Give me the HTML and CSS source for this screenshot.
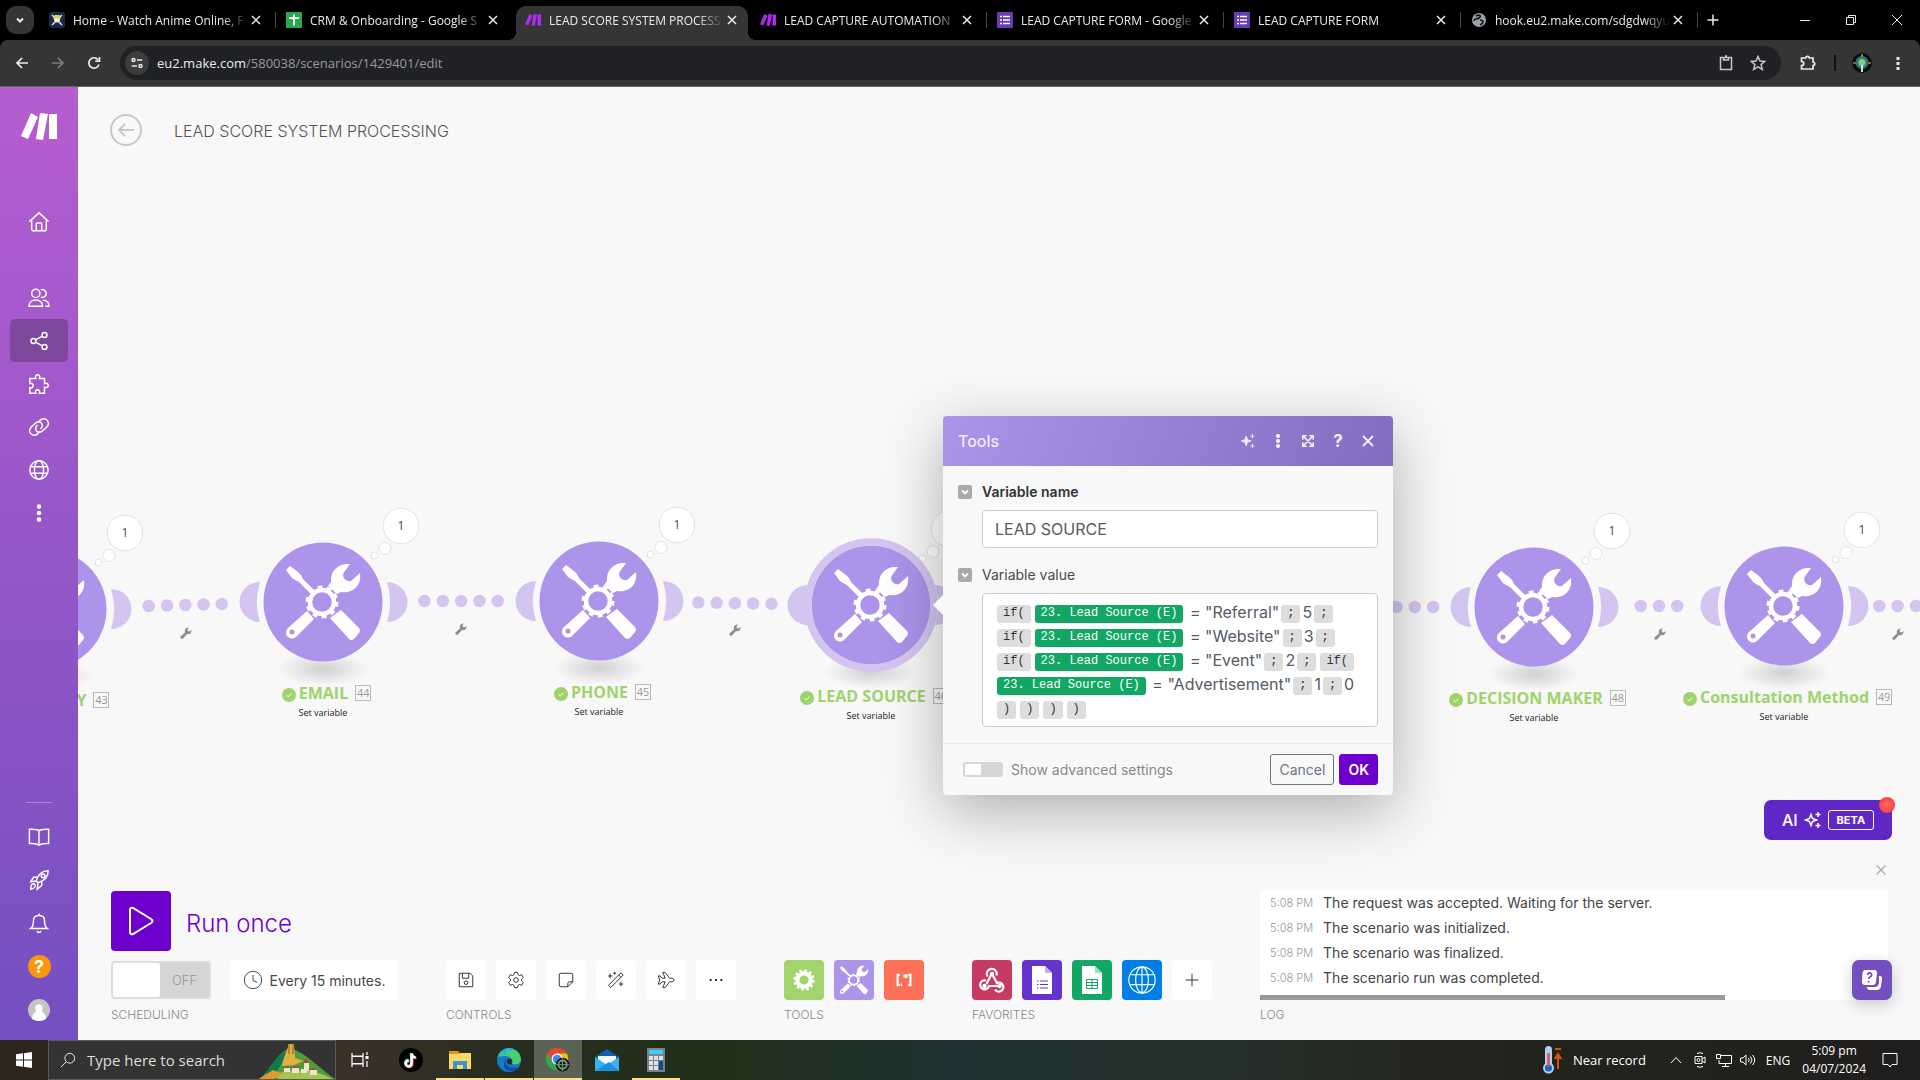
FILE: index.html
```
<!DOCTYPE html>
<html lang="en">
<head>
<meta charset="UTF-8" />
<meta name="viewport" content="width=device-width, initial-scale=1" />
<title>LEAD SCORE SYSTEM PROCESSING</title>
<link rel="stylesheet" href="styles.css">
</head>
<body>

<!-- shared icons -->
<svg class="sprite" aria-hidden="true">
  <radialGradient id="shadow"><stop offset="0" stop-color="#000" stop-opacity=".16"/><stop offset="1" stop-color="#000" stop-opacity="0"/></radialGradient>
  <symbol id="x" viewBox="0 0 16 16"><path d="M4 4l8 8M12 4l-8 8"/></symbol>
  <symbol id="make" viewBox="0 0 36 27"><path d="M10 0l7 4L7 26l-7-3zM19 0l8 1-5 26-7-1zM28 1h8v25h-8z"/></symbol>
  <symbol id="form" viewBox="0 0 16 16"><rect width="16" height="16" rx="1" fill="#673ab7"/><path d="M3 4.500h2M6 4.500h7M3 8h2M6 8h7M3 11.500h2M6 11.500h7" stroke="#fff" stroke-width="1.700"/></symbol>
  <symbol id="tools" viewBox="-42 -42 84 84">
    <path d="M-33-36L-37-32-31-24-28-22-24-20-13-9-9-12-20-23-22-27-25-30z"/>
    <path d="M27-38C15-39 7-31 8-20L5-16 14-8 18-10C28-8 39-15 37-29L28-21C23-20 19-24 20.500-29z"/>
    <circle cx="-1" r="12" fill="none" stroke="#fff" stroke-width="4.500"/>
    <circle cx="-1" r="15" fill="none" stroke="#fff" stroke-width="3" stroke-dasharray="4.700 4.720"/>
    <path fill-rule="evenodd" d="M-16 9L-35 26a5.600 5.600 0 0 0 8 9L-9 17zM-31 27.500a2.500 2.500 0 1 1 0 5 2.500 2.500 0 0 1 0-5z"/>
    <path d="M18 8L36 26Q38 28.500 36 31L31 37Q28.500 39 26 37L7 16z"/>
  </symbol>
  <symbol id="module" viewBox="-120 -100 240 200">
    <ellipse cy="67" rx="46" ry="17" fill="url(#shadow)"/>
    <path d="M-63-20a20.500 20 0 0 0 0 40a66 66 0 0 1 0-40zM64-20a20.500 20 0 0 1 0 40a66 66 0 0 0 0-40z" fill="#d4c5f0"/>
    <circle r="59.500" fill="#ab94ea"/>
    <use href="#tools" x="-42" y="-42" width="84" height="84" fill="#fff"/>
    <g fill="#fff" stroke="#e3e3e3"><circle cx="78" cy="-76" r="17.800"/><circle cx="62" cy="-53.500" r="6"/><circle cx="51.500" cy="-46.500" r="3.500"/></g>
  </symbol>
  <symbol id="ok" viewBox="0 0 14 14"><circle cx="7" cy="7" r="7" fill="#9fd36c"/><path d="M4.500 7.200l1.800 1.700 3.200-3.400" fill="none" stroke="#fff"/></symbol>
  <symbol id="wrench" viewBox="0 0 12 12"><path d="M.5 9.500L5 5.500C4 2.500 6 .3 9 .5L7.500 2.300 8 4 9.800 4.500 11.600 3c.3 3-2.100 4.800-4.600 4L3 11.500C1.500 12.500-.3 11 .5 9.500z" fill="#8d8d8d"/></symbol>
  <symbol id="sparkle" viewBox="0 0 18 18"><path d="M7 3.500l1.500 4L12.500 9l-4 1.500L7 14.500l-1.500-4L1.500 9l4-1.500zM14 1v5M11.500 3.500h5M14 12v5M11.500 14.500h5"/></symbol>
  <symbol id="chev" viewBox="0 0 14 14"><path d="M4 5.500l3 3 3-3" fill="none" stroke="#fff" stroke-width="1.800"/></symbol>
  <symbol id="globe" viewBox="0 0 24 24"><circle cx="12" cy="12" r="10"/><ellipse cx="12" cy="12" rx="5" ry="10"/><path d="M3.500 8.500h17M3.500 15.500h17"/></symbol>
  <symbol id="puzzle" viewBox="0 0 24 24"><path d="M2 6h6.500C6.500 .5 14.500 .5 12.500 6H18v5.500c5.500-2 5.500 6 0 4V22h-5.500c1.500-5-5.500-5-4 0H2v-6c5 1.500 5-6 0-4.500z"/></symbol>
</svg>

<header class="browser">
  <div class="tabs">
    <button class="tab-search" aria-label="Search tabs"><svg viewBox="0 0 14 14"><path d="M4 5.500l3 3 3-3"/></svg></button>
    <div class="tab">
      <svg class="favicon" viewBox="0 0 16 16"><rect width="16" height="16" rx="3" fill="#1c2b4a"/><path d="M3 3l10 10M13 3L3 13" stroke="#ddd" stroke-width="1.500"/><circle cx="8" cy="7.500" r="3" fill="#eee"/><path d="M4 6.500h8L10.500 3h-5z" fill="#e8d44d"/></svg>
      <span class="tab-title">Home - Watch Anime Online, F</span>
      <button class="tab-close" aria-label="Close tab"><svg><use href="#x"/></svg></button>
    </div>
    <div class="tab plain">
      <svg class="favicon" viewBox="0 0 16 16"><rect width="16" height="16" rx="1" fill="#2aa84f"/><path d="M8 2.500v11M3 6h10" stroke="#fff" stroke-width="2"/></svg>
      <span class="tab-title">CRM &amp; Onboarding - Google S</span>
      <button class="tab-close" aria-label="Close tab"><svg><use href="#x"/></svg></button>
    </div>
    <div class="tab active">
      <svg class="favicon make-icon"><use href="#make"/></svg>
      <span class="tab-title">LEAD SCORE SYSTEM PROCESS</span>
      <button class="tab-close" aria-label="Close tab"><svg><use href="#x"/></svg></button>
    </div>
    <div class="tab">
      <svg class="favicon make-icon"><use href="#make"/></svg>
      <span class="tab-title">LEAD CAPTURE AUTOMATION</span>
      <button class="tab-close" aria-label="Close tab"><svg><use href="#x"/></svg></button>
    </div>
    <div class="tab">
      <svg class="favicon"><use href="#form"/></svg>
      <span class="tab-title">LEAD CAPTURE FORM - Google</span>
      <button class="tab-close" aria-label="Close tab"><svg><use href="#x"/></svg></button>
    </div>
    <div class="tab">
      <svg class="favicon"><use href="#form"/></svg>
      <span class="tab-title">LEAD CAPTURE FORM</span>
      <button class="tab-close" aria-label="Close tab"><svg><use href="#x"/></svg></button>
    </div>
    <div class="tab">
      <svg class="favicon" viewBox="0 0 16 16"><circle cx="8" cy="8" r="7" fill="#9aa0a6"/><path d="M5 4c3-2 6 0 3 2s-5 0-5 3M9 8c4 0 4 3 0 5" fill="none" stroke="#111" stroke-width="1.600"/></svg>
      <span class="tab-title">hook.eu2.make.com/sdgdwqyu</span>
      <button class="tab-close" aria-label="Close tab"><svg><use href="#x"/></svg></button>
    </div>
    <button class="new-tab" aria-label="New tab"><svg viewBox="0 0 16 16"><path d="M8 2.500v11M2.500 8h11"/></svg></button>
    <div class="window-buttons">
      <button aria-label="Minimize"><svg viewBox="0 0 12 12"><path d="M1 6.500h10"/></svg></button>
      <button aria-label="Restore"><svg viewBox="0 0 12 12"><path d="M1.500 3.500h7v7h-7zM3.500 3.500v-2h7v7h-2"/></svg></button>
      <button aria-label="Close"><svg viewBox="0 0 12 12"><path d="M1 1l10 10M11 1L1 11"/></svg></button>
    </div>
  </div>
  <div class="toolbar">
    <button aria-label="Back"><svg viewBox="0 0 16 16"><path d="M14 8H3M8 3L3 8l5 5"/></svg></button>
    <button class="dim" aria-label="Forward"><svg viewBox="0 0 16 16"><path d="M2 8h11M8 3l5 5-5 5"/></svg></button>
    <button aria-label="Reload"><svg viewBox="0 0 16 16"><path d="M13 9.500A5.200 5.200 0 1 1 12 4.600M13.500 2v4.200h-4.200"/></svg></button>
    <div class="omnibox">
      <span class="site-info"><svg viewBox="0 0 16 16"><path d="M8 4.500h6M2 11.500h6"/><circle cx="4" cy="4.500" r="1.700"/><circle cx="12" cy="11.500" r="1.700"/></svg></span>
      <div class="url" role="textbox" contenteditable="true" aria-label="Address">eu2.make.com<span>/580038/scenarios/1429401/edit</span></div>
      <button aria-label="Clipboard"><svg viewBox="0 0 16 16"><path d="M2.500 2.500h11v12h-11zM5.500 2.500h5v2.500h-5zM7 1h2"/></svg></button>
      <button aria-label="Bookmark"><svg viewBox="0 0 16 16"><path d="M8 1.500l2 4.500 4.800.4-3.700 3.200 1.200 4.800L8 11.800l-4.300 2.600 1.200-4.800L1.200 6.400 6 6z"/></svg></button>
    </div>
    <button class="extensions" aria-label="Extensions"><svg viewBox="0 0 16 16"><path d="M1.500 3h4.200c0-2.300 3.600-2.300 3.600 0h3.700v4c2.300 0 2.300 3.500 0 3.500V14H1.500v-3.500c3 0 3-4 0-4z"/></svg></button>
    <span class="divider"></span>
    <svg class="profile" viewBox="0 0 20 20"><circle cx="10" cy="10" r="10" fill="#0b0f0c"/><circle cx="10" cy="9.500" r="6.500" fill="#2c7a73"/><circle cx="10" cy="9.500" r="3.500" fill="#8cc58a"/><path d="M1 10h18M10 1v18" stroke="#9a8a4a" stroke-dasharray="3 12"/><path d="M10 12v7" stroke="#ddd" stroke-width="2"/></svg>
    <button class="menu" aria-label="Menu"><svg viewBox="0 0 16 16"><path class="solid" d="M6.500 2h3v3h-3zM6.500 7h3v3h-3zM6.500 12h3v3h-3z"/></svg></button>
  </div>
</header>

<div class="app">
  <nav class="sidebar">
    <a class="logo" href="#" aria-label="Make"><svg><use href="#make"/></svg></a>
    <a href="#" aria-label="Home"><svg viewBox="0 0 24 24"><path d="M1.500 11.500L12 2l10.500 9.500M4 10v9.500q0 2 2 2h12q2 0 2-2V10M9 21.500V14q0-1 1-1h4q1 0 1 1v7.500"/></svg></a>
    <a class="team" href="#" aria-label="Team"><svg viewBox="0 0 24 24"><circle cx="8.500" cy="7" r="4.500"/><path d="M14 3a4.300 4.300 0 1 1 0 8M1 21c0-9 15-9 15 0zM16 14.500c4 0 7 2 7 6.500h-4"/></svg></a>
    <a class="current" href="#" aria-label="Scenarios"><svg viewBox="0 0 24 24"><circle cx="6" cy="12" r="2.700"/><circle cx="18" cy="5.500" r="2.700"/><circle cx="18" cy="18.500" r="2.700"/><path d="M8.700 10.500l6.600-3.500M8.700 13.500l6.600 3.500"/></svg></a>
    <a href="#" aria-label="Templates"><svg><use href="#puzzle"/></svg></a>
    <a href="#" aria-label="Connections"><svg viewBox="0 0 24 24"><path d="M13 17l-2.500 2.500c-3 3-7 1-8-1-1.500-2.500-.5-5 1-6.500L8 8c3-3 7-1.500 7.500 1.500.5 2-.5 3.500-2 4.500M11 7l2.500-2.500c3-3 7-1 8 1 1.500 2.500.5 5-1 6.500L16 16c-3 3-7 1.500-7.500-1.500C8 12.500 9 11 10.500 10"/></svg></a>
    <a href="#" aria-label="Webhooks"><svg><use href="#globe"/></svg></a>
    <a href="#" aria-label="More"><svg viewBox="0 0 24 24"><g class="solid"><circle cx="12" cy="5" r="2.500"/><circle cx="12" cy="12" r="2.500"/><circle cx="12" cy="19" r="2.500"/></g></svg></a>
    <hr>
    <a href="#" aria-label="Resources"><svg viewBox="0 0 24 24"><path d="M12 5C9 3 4 3.500 1.500 3.500V19c4 0 8-.5 10.500 2 2.500-2.500 6.500-2 10.500-2V3.500C20 3.500 15 3 12 5zv16"/></svg></a>
    <a href="#" aria-label="What's new"><svg viewBox="0 0 24 24"><path d="M9 13C11 6 15 2 22 2c0 7-4 11-11 13zM10 9H6l-3 5 6-1M15 14v4l-5 4 1-7M3 22c0-5 1-6 4-6 2 2 1 5-4 6z"/><circle cx="16.500" cy="7.500" r="2"/></svg></a>
    <a href="#" aria-label="Notifications"><svg viewBox="0 0 24 24"><path d="M3 18c3-2 3-5 3-9 0-7 12-7 12 0 0 4 0 7 3 9zM12 3V1.500M9.500 21q2.500 2.500 5 0"/></svg></a>
    <a class="help" href="#" aria-label="Help">?</a>
    <a class="user" href="#" aria-label="Profile"><svg viewBox="0 0 22 22"><circle cx="11" cy="11" r="11" fill="#c4c4c4"/><path d="M4 20c0-6 4-6 4-8-4-9 10-9 6 0 0 2 4 2 4 8q-7 4-14 0z" fill="#fff"/></svg></a>
  </nav>

  <main class="scenario">
    <div class="title-bar">
      <button class="back" aria-label="Back"><svg viewBox="0 0 32 32"><circle cx="16" cy="16" r="15"/><path d="M24 16H9M15 10l-6 6 6 6"/></svg></button>
      <h1>LEAD SCORE SYSTEM PROCESSING</h1>
    </div>

    <div class="canvas">
      <svg class="links">
        <g stroke="#d4c5f0" stroke-width="12.500" stroke-linecap="round" stroke-dasharray="0 18.300">
          <path d="M70.700 519L144 517M346.500 514h73.500M620.300 515.500L693.600 516.800M1318.500 520h37M1562.700 519h37M1801.300 519h38"/>
        </g>
        <use href="#wrench" x="102" y="540" width="12" height="12"/>
        <use href="#wrench" x="377" y="536" width="12" height="12"/>
        <use href="#wrench" x="651" y="537" width="12" height="12"/>
        <use href="#wrench" x="1576" y="541" width="12" height="12"/>
        <use href="#wrench" x="1814" y="541" width="12" height="12"/>
      </svg>

      <div class="module m43">
        <svg class="shape"><use href="#module"/></svg>
        <span class="count">1</span>
        <div class="name"><svg><use href="#ok"/></svg>COUNTRY<span class="id">43</span></div>
        <div class="action">Set variable</div>
      </div>
      <div class="module m44">
        <svg class="shape"><use href="#module"/></svg>
        <span class="count">1</span>
        <div class="name"><svg><use href="#ok"/></svg>EMAIL<span class="id">44</span></div>
        <div class="action">Set variable</div>
      </div>
      <div class="module m45">
        <svg class="shape"><use href="#module"/></svg>
        <span class="count">1</span>
        <div class="name"><svg><use href="#ok"/></svg>PHONE<span class="id">45</span></div>
        <div class="action">Set variable</div>
      </div>
      <div class="module m46">
        <svg class="shape" viewBox="-120 -100 240 200"><use href="#module" x="-120" y="-100" width="240" height="200"/><circle r="63" fill="none" stroke="#d4c5f0" stroke-width="7.500"/></svg>
        <span class="count">1</span>
        <div class="name"><svg><use href="#ok"/></svg>LEAD SOURCE<span class="id">46</span></div>
        <div class="action">Set variable</div>
      </div>
      <div class="module m48">
        <svg class="shape"><use href="#module"/></svg>
        <span class="count">1</span>
        <div class="name"><svg><use href="#ok"/></svg>DECISION MAKER<span class="id">48</span></div>
        <div class="action">Set variable</div>
      </div>
      <div class="module m49">
        <svg class="shape"><use href="#module"/></svg>
        <span class="count">1</span>
        <div class="name"><svg><use href="#ok"/></svg>Consultation Method<span class="id">49</span></div>
        <div class="action">Set variable</div>
      </div>
    </div>

    <section class="panel">
      <header class="panel-head">
        <h2>Tools</h2>
        <button aria-label="AI assistant"><svg class="solid"><use href="#sparkle"/></svg></button>
        <button aria-label="More"><svg class="solid" viewBox="0 0 16 16"><circle cx="8" cy="3" r="1.700"/><circle cx="8" cy="8" r="1.700"/><circle cx="8" cy="13" r="1.700"/></svg></button>
        <button aria-label="Expand"><svg viewBox="0 0 16 16"><path d="M2 6.500V2h4.500M9.500 2H14v4.500M14 9.500V14H9.500M6.500 14H2V9.500M3 3l10 10M13 3L3 13"/></svg></button>
        <button class="question" aria-label="Help">?</button>
        <button aria-label="Close"><svg class="wide"><use href="#x"/></svg></button>
      </header>
      <div class="panel-body">
        <div class="field">
          <button class="fold" aria-label="Collapse"><svg><use href="#chev"/></svg></button>
          <label class="required" for="varName">Variable name</label>
          <input type="text" id="varName" value="LEAD SOURCE" />
        </div>
        <div class="field">
          <button class="fold" aria-label="Collapse"><svg><use href="#chev"/></svg></button>
          <span class="label" id="varValue">Variable value</span>
          <div class="formula" role="textbox" contenteditable="true" spellcheck="false" aria-labelledby="varValue">
            <div><code>if(</code><code class="var">23. Lead Source (E)</code> = "Referral"<code>;</code>5<code>;</code></div>
            <div><code>if(</code><code class="var">23. Lead Source (E)</code> = "Website"<code>;</code>3<code>;</code></div>
            <div><code>if(</code><code class="var">23. Lead Source (E)</code> = "Event"<code>;</code>2<code>;</code><code>if(</code></div>
            <div><code class="var">23. Lead Source (E)</code> = "Advertisement"<code>;</code>1<code>;</code>0</div>
            <div><code>)</code><code>)</code><code>)</code><code>)</code></div>
          </div>
        </div>
      </div>
      <footer class="panel-foot">
        <label class="advanced"><input type="checkbox" class="switch" />Show advanced settings</label>
        <button class="cancel">Cancel</button>
        <button class="submit">OK</button>
      </footer>
    </section>

    <button class="ai">AI <svg><use href="#sparkle"/></svg><span class="beta">BETA</span></button>

    <div class="dock">
      <section class="group scheduling">
        <button class="run"><span class="run-icon"><svg viewBox="0 0 30 30"><path d="M4 4q0-3 3-2l18 11q3 2 0 4L7 28q-3 1-3-2z"/></svg></span><span class="run-text">Run once</span></button>
        <div class="row">
          <label class="power"><input type="checkbox" /><span>OFF</span></label>
          <button class="interval"><svg viewBox="0 0 20 20"><circle cx="10" cy="10" r="8.700"/><path d="M10 5v5.500l4 2"/></svg>Every 15 minutes.</button>
        </div>
        <h3>SCHEDULING</h3>
      </section>
      <section class="group">
        <div class="row">
          <button class="tile" aria-label="Save"><svg viewBox="0 0 20 20"><path d="M2.500 2.500h12l3 3v12h-15zM6 2.500V8h7V2.500"/><circle cx="10" cy="13" r="2"/></svg></button>
          <button class="tile" aria-label="Settings"><svg viewBox="0 0 20 20"><path d="M8.300 1.500h3.400l.6 2.600 1.600.9 2.500-.8 1.700 3-1.900 1.800v2l1.900 1.800-1.700 3-2.500-.8-1.600.9-.6 2.600H8.300l-.6-2.600-1.600-.9-2.500.8-1.700-3L3.800 11V9L1.900 7.200l1.700-3 2.500.8 1.600-.9z"/><circle cx="10" cy="10" r="2.600"/></svg></button>
          <button class="tile" aria-label="Notes"><svg viewBox="0 0 20 20"><path d="M2.500 4.500q0-2 2-2h11q2 0 2 2V12l-5.500 5.500H4.500q-2 0-2-2zM17.500 12H14q-2 0-2 2v3.500"/></svg></button>
          <button class="tile" aria-label="Auto-align"><svg viewBox="0 0 20 20"><path d="M1.500 16L15.500 2l2.500 2.500L4 18.500zM13 4.500L15.500 7M3.500 3v5M1 5.500h5M8.500 1v3M7 2.500h3M15.500 12v5M13 14.500h5"/></svg></button>
          <button class="tile" aria-label="Explain flow"><svg viewBox="0 0 20 20"><path d="M1.500 5.500h2l2 2.500h3.500L6.500 1.500h2.500l5 6.500h3q2 .8 2 2t-2 2h-3l-5 6.500H6.500L9 12H5.500l-2 2.500h-2L3 10z"/></svg></button>
          <button class="tile" aria-label="More"><svg viewBox="0 0 20 20"><path d="M3 10h2M9 10h2M15 10h2" stroke-width="2"/></svg></button>
        </div>
        <h3>CONTROLS</h3>
      </section>
      <section class="group">
        <div class="row">
          <button class="tile green" aria-label="Flow control"><svg viewBox="0 0 28 28"><circle cx="14" cy="14" r="7.200" stroke-width="4.500"/><circle cx="14" cy="14" r="10.200" stroke-width="2.800" stroke-dasharray="2.900 2.440"/></svg></button>
          <button class="tile violet" aria-label="Tools"><svg class="solid"><use href="#tools"/></svg></button>
          <button class="tile coral" aria-label="Text parser"><svg viewBox="0 0 28 28"><path d="M9 8H6.500v12H9M19 8h2.500v12H19" stroke-width="2.500"/><path d="M11 18v3M16 7v5M13.500 8l5 3M18.500 8l-5 3" stroke-width="1.600"/></svg></button>
        </div>
        <h3>TOOLS</h3>
      </section>
      <section class="group">
        <div class="row">
          <button class="tile crimson" aria-label="Webhooks"><svg viewBox="0 0 28 28"><g stroke-width="2.200"><path d="M9.500 10.500a5 5 0 1 1 9-1M14 8l5 9a4.500 4.500 0 1 1-2 6.500M13.500 8l-5 10M8 14.500a4.500 4.500 0 1 0 3 5.500h9"/></g><g fill="#fff" stroke="none"><circle cx="14" cy="8" r="2.200"/><circle cx="6.500" cy="20" r="2.200"/><circle cx="21.500" cy="20" r="2.200"/></g></svg></button>
          <button class="tile purple" aria-label="Google Forms"><svg viewBox="0 0 28 28"><path d="M4 0h13l7 7v21H4z" fill="#fff" stroke="none"/><path d="M17 0l7 7h-7z" fill="#c3b2ea" stroke="none"/><path d="M9 15h1.500M12 15h8M9 18.500h1.500M12 18.500h8M9 22h1.500M12 22h8" stroke="#6633cc"/></svg></button>
          <button class="tile emerald" aria-label="Google Sheets"><svg viewBox="0 0 28 28"><path d="M4 0h13l7 7v21H4z" fill="#fff" stroke="none"/><path d="M17 0l7 7h-7z" fill="#9fdcc0" stroke="none"/><path d="M8.500 13.500h11v9h-11zM8.500 16.500h11M8.500 19.500h11M14 13.500v9" stroke="#12a765"/></svg></button>
          <button class="tile blue" aria-label="HTTP"><svg viewBox="0 0 24 24"><circle cx="12" cy="12" r="11.300"/><ellipse cx="12" cy="12" rx="5.500" ry="11"/><path d="M2 7.500h20M2 16h20M12 1v22"/></svg></button>
          <button class="tile" aria-label="Add"><svg viewBox="0 0 20 20"><path d="M10 3v14M3 10h14"/></svg></button>
        </div>
        <h3>FAVORITES</h3>
      </section>
      <section class="group log">
        <button class="log-close" aria-label="Close log"><svg><use href="#x"/></svg></button>
        <div class="log-box">
          <ul>
            <li><time>5:08 PM</time>The request was accepted. Waiting for the server.</li>
            <li><time>5:08 PM</time>The scenario was initialized.</li>
            <li><time>5:08 PM</time>The scenario was finalized.</li>
            <li><time>5:08 PM</time>The scenario run was completed.</li>
          </ul>
          <div class="log-scroll"></div>
          <button class="faq" aria-label="Questions"><svg viewBox="0 0 22 22"><path d="M4 1h9q3 0 3 3l-1 9q-.5 3-3 3H4q-3 0-3-3L1.500 4Q2 1 4 1z" fill="#fff"/><path d="M18 7c3 0 3 1 3 3l-1 7q-.5 4-4 4H9q-3 0-3-3h7c4 0 5-2 5-6z" fill="#fff"/><path d="M6.500 6q.3-2 2.300-2t1.800 2q-.2 1.300-1.600 2T7.800 10M7.500 12v1.500" fill="none" stroke="#734fc0" stroke-width="1.800"/></svg></button>
        </div>
        <h3>LOG</h3>
      </section>
    </div>
  </main>
</div>

<footer class="taskbar">
  <button class="start" aria-label="Start"><svg viewBox="0 0 16 16"><path d="M0 2.300L7 1.300v6.200H0zM8 1.200L16 0v7.500H8zM0 8.500h7v6.200l-7-1zM8 8.500h8V16l-8-1.200z" fill="#fff" stroke="none"/></svg></button>
  <div class="search">
    <svg viewBox="0 0 18 18"><circle cx="11" cy="7" r="5.500"/><path d="M7 11l-6 6"/></svg>
    <input type="text" placeholder="Type here to search" aria-label="Type here to search" />
    <svg class="castle" viewBox="0 0 76 36"><path d="M0 36C10 30 20 6 31 6s28 18 45 30z" fill="#4f9c3f"/><path d="M6 30C14 22 20 10 27 8c-2 12-8 18-14 26z" fill="#0d7a4c"/><path d="M24 18l6-17h5l1 14 9 3-10 4-12 1z" fill="#e0b243"/><path d="M29 1h2v10h-2zM33 1h2v10h-2z" fill="#b58a2c"/><path d="M15 33c12-8 40-8 58 3H20z" fill="#a3c552"/><path d="M0 36l14-9 10 4-10 5z" fill="#e49a2a"/><path d="M25 25h6v4h-6zM33 25h7v5h-7zM42 26h6v4h-6zM45 20h5v8h-5zM51 27h7v5h-7z" fill="#f2e3d0"/><path d="M24 25l4-2 4 2zM32 25l4-2 5 2zM44 20l3-5 3 5zM50 27l4-2 5 2z" fill="#b0452b"/></svg>
  </div>
  <div class="apps">
    <button class="task-view" aria-label="Task View"><svg viewBox="0 0 24 24"><path d="M4 5v3h11V5M4 8.500v7h11v-7zM4 19v-3h11v3M19 4v3M19 13v6" fill="none" stroke="#fff" stroke-width="1.200"/><path d="M17.500 8h3v3h-3z" fill="#fff"/></svg></button>
    <button aria-label="TikTok"><svg viewBox="0 0 24 24"><circle cx="12" cy="12" r="12" fill="#000"/><g fill="none" stroke-width="2.300"><path d="M12 5v10a3 3 0 1 1-3-3M12 5q.5 4 4 4" stroke="#25f4ee"/><path d="M13.500 6v10a3 3 0 1 1-3-3M13.500 6q.5 4 4 4" stroke="#fe2c55"/><path d="M12.700 5.500v10a3 3 0 1 1-3-3M12.700 5.500q.5 4 4 4" stroke="#fff"/></g></svg></button>
    <button class="open" aria-label="File Explorer"><svg viewBox="0 0 24 24"><path d="M1 3h9l2 2h11v5H1z" fill="#d99a16"/><path d="M1 6h10l2-1h10v16H1z" fill="#ffd766"/><path d="M5 21v-8h14v8h-4v-4H9v4z" fill="#3b94d9"/></svg></button>
    <button class="open" aria-label="Edge"><svg viewBox="0 0 24 24"><circle cx="12" cy="12" r="12" fill="#1679c9"/><path d="M1 9C4-2 22-3 24 11c0 5-5 6-9 5 3-6-5-10-14-7z" fill="#48d06f"/><path d="M1 9C4-1 15-2 19 3c-6-1-9 0-11 4-3-1-5 0-7 2z" fill="#29b5d8"/><path d="M10 10c-4 6 2 12 12 9-5 7-19 5-14-7z" fill="#0f4ea3"/><path d="M10 13c0-3 5-3 5 0-1 2 0 3 1 3.500C12 17 10 16 10 13z" fill="#232c1b"/></svg></button>
    <button class="open focused" aria-label="Chrome"><svg viewBox="0 0 26 26"><circle cx="12" cy="12" r="12" fill="#2da94f"/><path d="M12 0a12 12 0 0 1 10.400 6H12a6 6 0 0 0-5.200 9L1.600 6A12 12 0 0 1 12 0z" fill="#ea4335"/><path d="M22.400 6A12 12 0 0 1 12 24l5.200-9a6 6 0 0 0 0-6l-5.200-3z" fill="#fbbc05"/><circle cx="12" cy="12" r="6" fill="#fff"/><circle cx="12" cy="12" r="4.700" fill="#4285f4"/><circle cx="18" cy="18" r="7.500" fill="#11160f"/><circle cx="18" cy="18" r="4.500" fill="none" stroke="#5ea08b" stroke-width="2"/><path d="M18 11v14M11 18h14" stroke="#8b9a6a"/></svg></button>
    <button aria-label="Mail"><svg viewBox="0 0 24 24"><path d="M0 9l12-8 12 8v5H0z" fill="#0f61b0"/><path d="M3 8h18v8H3z" fill="#f4f8fb"/><path d="M0 9l12 8 12-8v14H0z" fill="#39b2f2"/><path d="M0 23l14-9 10 9z" fill="#1c8fe0"/></svg></button>
    <button class="open" aria-label="Calculator"><svg viewBox="0 0 24 24"><rect x="3" width="18" height="24" rx="1" fill="#77828c"/><path d="M5 2h14v4H5z" fill="#3fd0fa"/><path d="M5 8h4v4H5zM10 8h4v4h-4zM15 8h4v4h-4zM5 13h4v4H5zM10 13h4v4h-4zM5 18h4v4H5zM10 18h4v4h-4z" fill="#dde3e7"/><path d="M15 13h4v9h-4z" fill="#154b85"/></svg></button>
  </div>
  <div class="tray">
    <button class="weather"><svg viewBox="0 0 20 30"><rect x="2" y="1" width="7" height="22" rx="3.500" fill="#a8d4f2"/><circle cx="5.500" cy="23" r="5.500" fill="#a8d4f2"/><circle cx="5.500" cy="23" r="3.500" fill="#1565c0"/><path d="M5.500 8v14" stroke="#e5484d" stroke-width="2.500"/><path d="M12 4h6M15 24V10M12.500 13l2.500-4 2.500 4z" stroke="#d9500b" stroke-width="2" fill="#d9500b"/></svg>Near record</button>
    <svg viewBox="0 0 16 16"><path d="M3 11l5-5.500 5 5.500"/></svg>
    <svg viewBox="0 0 16 16"><path d="M5 1.500q3-1.500 6 0M5 14.500q3 1.500 6 0M3 4.500h7v7H3zM10 7l3-2v6l-3-2"/><circle cx="6.500" cy="8" r="1.500"/></svg>
    <svg viewBox="0 0 16 16"><path d="M4 3.500h11.500v8H3V8M9.500 11.500V14M6 14.500h7M.5 2.500h4v4h-4z"/></svg>
    <svg viewBox="0 0 16 16"><path d="M.5 6h2.500l3-3v10l-3-3H.5zM8.500 6q1.500 2 0 4M10.500 4.500q3 3.500 0 7M12.500 3q4.500 5 0 10"/></svg>
    <span class="lang">ENG</span>
    <div class="clock"><span>5:09 pm</span><span>04/07/2024</span></div>
    <svg class="notice" viewBox="0 0 16 16"><path d="M1 1.500h14v11h-5L8 15l-2-2.500H1z"/></svg>
  </div>
</footer>

</body>
</html>
```
FILE: styles.css
```
* { box-sizing: border-box; }
html, body { height: 100%; }
body { margin: 0; display: flex; flex-direction: column; overflow: hidden; background: #f8f8f8; color: #4a4a4a; font-family: Inter, "Open Sans", sans-serif; font-size: 14px; }
button { padding: 0; border: 0; background: none; color: inherit; font: inherit; cursor: pointer; display: flex; align-items: center; justify-content: center; }
a { color: inherit; text-decoration: none; }
h1, h2, h3, ul { margin: 0; padding: 0; font-weight: 300; }
svg { flex: none; fill: none; stroke: currentColor; width: 16px; height: 16px; }
.solid { fill: currentColor; }
.sprite { position: absolute; width: 0; height: 0; }
.sprite symbol { stroke: inherit; }

/* browser window */
.browser { background: #000; color: #e8eaed; font-family: "Segoe UI", "Open Sans", sans-serif; font-size: 12px; }
.tabs { display: flex; height: 40px; padding: 6px 0 0 6px; }
.tab-search { width: 28px; height: 28px; margin-right: 6px; border-radius: 10px; background: #353535; }
.tab-search svg { width: 14px; height: 14px; stroke-width: 2; }
.tab { position: relative; display: flex; align-items: center; gap: 8px; width: 232px; min-width: 0; margin-right: 5px; padding: 0 8px 6px 9px; }
.tab::after { content: ""; position: absolute; right: -4px; top: 6px; width: 1px; height: 16px; background: #444; }
.tab.plain::after { display: none; }
.tab.active { margin-left: 2px; margin-right: 3px; background: #353535; border-radius: 10px 10px 0 0; }
.tab.active::before, .tab.active::after { content: ""; position: absolute; top: auto; bottom: 0; width: 8px; height: 8px; }
.tab.active::before { left: -8px; background: radial-gradient(circle at 0 0, transparent 8px, #353535 8px); }
.tab.active::after { right: -8px; background: radial-gradient(circle at 100% 0, transparent 8px, #353535 8px); }
.favicon { width: 16px; height: 16px; stroke: none; }
.make-icon { fill: #b02af0; }
.tab-title { flex: 1; margin-right: -8px; white-space: nowrap; -webkit-mask-image: linear-gradient(90deg, #000 85%, transparent); mask-image: linear-gradient(90deg, #000 85%, transparent); }
.tab-close svg, .new-tab svg { stroke-width: 1.5; }
.new-tab { width: 28px; height: 28px; }
.window-buttons { display: flex; margin-left: auto; }
.window-buttons button { width: 46px; height: 28px; }
.window-buttons svg { width: 12px; height: 12px; }
.toolbar { display: flex; align-items: center; height: 47px; padding: 0 8px; background: #353535; border-bottom: 1px solid #666; border-radius: 8px 8px 0 0; }
.toolbar button { width: 28px; height: 28px; margin-right: 8px; }
.toolbar svg { stroke-width: 1.700; }
.toolbar .dim { color: #7d7d7d; }
.omnibox { flex: 1; display: flex; align-items: center; height: 34px; margin: 0 13px 0 4px; padding: 0 11px 0 5px; border-radius: 17px; background: #202124; }
.omnibox button { width: 24px; margin: 0 0 0 8px; color: #c7c7c7; }
.omnibox button svg { stroke-width: 1.500; }
.site-info { display: flex; align-items: center; justify-content: center; width: 24px; height: 24px; border-radius: 50%; background: #3c3c3c; }
.site-info svg { width: 14px; height: 14px; }
.url { flex: 1; margin-left: 8px; font-size: 13px; }
.url span { color: #9a9a9a; }
.divider { width: 2px; height: 16px; margin: 0 16px 0 4px; background: #111; }
.profile { width: 20px; height: 20px; margin-right: 12px; stroke: none; }
.toolbar .menu { width: 28px; margin: 0; }
.menu svg { stroke: none; }

/* app */
.app { flex: 1; display: flex; min-height: 0; }
.sidebar { position: relative; z-index: 2; display: flex; flex-direction: column; align-items: center; width: 78px; padding-bottom: 9px; background: linear-gradient(#b65dcf, #734fc0); color: #fff; }
.sidebar a { display: flex; align-items: center; justify-content: center; width: 58px; height: 43px; border-radius: 5px; }
.sidebar svg { width: 22px; height: 22px; stroke-width: 1.600; }
.sidebar .logo { height: 78px; margin-bottom: 35px; }
.logo svg { width: 36px; height: 27px; fill: #fff; stroke: none; }
.sidebar .team { margin-top: 33px; }
.sidebar .current { background: rgba(80, 50, 100, .45); }
.sidebar hr { width: 26px; margin: auto 0 12px; border: 0; border-top: 1px solid rgba(255, 255, 255, .3); }
.sidebar .solid, .sidebar .user svg { stroke: none; }
.sidebar .help { width: 23px; height: 23px; margin: 11px 0 10px; border-radius: 50%; background: #fb960b; font-size: 18px; font-weight: 700; }

.scenario { position: relative; flex: 1; display: flex; flex-direction: column; min-width: 0; overflow: hidden; }
.title-bar { position: relative; z-index: 1; display: flex; align-items: center; gap: 32px; padding: 27px 32px; }
.back svg { width: 32px; height: 32px; color: #c8c8c8; stroke-width: 2; }
.title-bar h1 { padding-top: 2px; font-size: 16px; color: #555; }

/* modules sit on a free canvas */
.canvas { position: absolute; inset: 0; overflow: hidden; font-family: "Segoe UI", "Open Sans", sans-serif; }
.links { position: absolute; inset: 0; width: 100%; height: 100%; stroke: none; }
.module { position: absolute; width: 240px; margin: -100px 0 0 -120px; text-align: center; }
.m43 { left: -31px; top: 522px; }
.m44 { left: 245px; top: 515px; }
.m45 { left: 521px; top: 514px; }
.m46 { left: 793px; top: 518px; }
.m48 { left: 1456px; top: 520px; }
.m49 { left: 1706px; top: 519px; }
.shape { display: block; width: 240px; height: 200px; stroke: none; }
.count { position: absolute; left: 180px; top: 15px; width: 36px; line-height: 18px; font-size: 12px; }
.name { display: flex; align-items: center; justify-content: center; gap: 3px; height: 22px; margin-top: -20px; padding-left: 7px; white-space: nowrap; color: #9fd36c; font-size: 16px; font-weight: 700; }
.name svg { width: 14px; height: 14px; margin-top: 3px; stroke: none; }
.id { width: 16px; margin-left: 4px; border: 1px solid #bbb; color: #999; font-size: 11px; font-weight: 400; line-height: 14px; }
.action { margin-top: 2px; font-size: 9px; line-height: 14px; color: #222; }

/* module settings */
.panel { position: absolute; z-index: 3; left: 865px; top: 329px; width: 450px; border-radius: 4px; background: #f8f8f8; box-shadow: 0 16px 60px rgba(0, 0, 0, .3); }
.panel::before { content: ""; position: absolute; left: -10px; top: 179px; border: solid transparent; border-width: 10px 10px 10px 0; border-right-color: #f8f8f8; }
.panel-head { display: flex; align-items: center; height: 50px; padding: 0 10px 0 15px; border-radius: 4px 4px 0 0; background: linear-gradient(110deg, #ab94ea, #836bc0); color: #f0ebfb; }
.panel-head h2 { flex: 1; font-size: 16px; font-weight: 500; }
.panel-head button { width: 30px; height: 30px; }
.panel-head svg { width: 14px; height: 14px; stroke-width: 1.700; }
.panel-head svg.solid { width: 16px; height: 16px; stroke-width: 1; }
.panel-head svg.wide { width: 20px; height: 20px; stroke-width: 1.500; }
.panel-head .question { font-size: 17px; font-weight: 700; }
.panel-body { display: flex; flex-direction: column; gap: 17px; padding: 16px 15px; }
.field { display: grid; grid-template-columns: 14px 1fr; gap: 8px 10px; align-items: center; line-height: 20px; }
.fold { width: 14px; height: 14px; border-radius: 2px; background: #aaa; }
.fold svg { width: 14px; height: 14px; }
.required { color: #333; font-weight: 600; }
.field input, .formula { grid-column: 2; width: 100%; border: 1px solid #ccc; border-radius: 4px; background: #fff; color: #555b66; font: 400 16px Inter, sans-serif; }
.field input { height: 38px; padding: 0 12px; }
.formula { min-height: 134px; padding: 6px 12px; line-height: 24px; white-space: nowrap; }
.formula div { height: 24px; }
.formula code { display: inline-block; height: 18px; margin: 0 2px; padding: 0 6px; border-radius: 3px; background: #ddd; color: #333; font: 12px/17px "Liberation Mono", monospace; vertical-align: middle; }
.formula .var { background: #12a765; color: #fff; }
.panel-foot { display: flex; align-items: center; gap: 5px; padding: 10px 15px; border-top: 1px solid #eaeaea; }
.advanced { flex: 1; display: flex; align-items: center; gap: 8px; margin-left: 5px; color: #888; }
.switch { appearance: none; width: 40px; height: 15px; margin: 0; border: 2px solid #d6d6d6; border-radius: 3px; background: linear-gradient(90deg, #fff 16px, #d6d6d6 16px); }
.cancel, .submit { height: 31px; padding: 0 8px; border: 1px solid #6c757d; border-radius: 3px; color: #6c757d; }
.submit { border-color: #6d00cc; background: #6d00cc; color: #fff; font-weight: 600; }

.ai { position: absolute; right: 28px; bottom: 200px; gap: 6px; width: 128px; height: 40px; border-radius: 7px; background: #5f28c6; color: #fff; font-size: 16px; font-weight: 500; }
.ai svg { width: 18px; height: 18px; stroke-width: 1.500; }
.ai::after { content: ""; position: absolute; right: -3px; top: -3px; width: 16px; height: 16px; border-radius: 50%; background: radial-gradient(#ff6b6b, #ff2d2d); }
.beta { padding: 0 8px; border: 1px solid #fff; border-radius: 3px; font-size: 11px; font-weight: 700; line-height: 18px; }

/* bottom dock */
.dock { position: relative; z-index: 1; display: flex; align-items: flex-end; gap: 48px; margin-top: auto; padding: 0 32px 17px 33px; }
.group h3 { height: 16px; margin-top: 7px; color: #888; font-size: 12px; line-height: 16px; }
.row { display: flex; gap: 10px; }
.scheduling { width: 287px; }
.scheduling .row { justify-content: space-between; align-items: center; }
.run { gap: 15px; margin-bottom: 9px; color: #6d00cc; font-size: 24px; font-weight: 300; }
.run-text { padding-top: 4px; }
.run-icon { display: flex; align-items: center; justify-content: center; width: 60px; height: 60px; border-radius: 4px; background: #6d00cc; color: #fff; }
.run-icon svg { width: 30px; height: 30px; stroke-width: 2; }
.power { display: flex; align-items: center; width: 100px; height: 38px; border: 2px solid #ddd; border-radius: 4px; background: #d5d5d5; color: #999; }
.power input { appearance: none; width: 47px; height: 34px; margin: 0; border-radius: 2px; background: #fff; }
.power span { flex: 1; text-align: center; font-weight: 300; font-size: 13px; }
.interval { gap: 7px; width: 168px; height: 40px; border-radius: 4px; background: #fff; }
.interval svg { width: 20px; height: 20px; }
.tile { width: 40px; height: 40px; border-radius: 4px; background: #fff; color: #222; }
.tile svg { width: 18px; height: 18px; }
.green, .violet, .coral, .crimson, .purple, .emerald, .blue { color: #fff; }
.green svg, .violet svg, .coral svg, .crimson svg, .purple svg, .emerald svg, .blue svg { width: 28px; height: 28px; }
.green { background: #a2d46e; }
.violet { background: #ab94ea; }
.violet svg { stroke: none; width: 32px; height: 32px; }
.green svg { width: 26px; height: 26px; }
.coral { background: #fd7057; }
.coral svg { width: 24px; height: 24px; }
.crimson { background: #c73a63; }
.purple { background: #6633cc; }
.emerald { background: #12a765; }
.blue { background: #007ee5; }
.log { flex: 1; min-width: 0; }
.log-close { margin: 0 -2px 11px auto; color: #aaa; }
.log-close svg { width: 18px; height: 18px; }
.log-box { position: relative; height: 110px; border-radius: 3px; background: #fff; }
.log-box ul { list-style: none; font-weight: 400; }
.log-box li { display: flex; align-items: center; gap: 10px; height: 25px; padding-left: 10px; color: #444; }
.log-box time { color: #999; font-size: 11px; font-weight: 300; }
.log-scroll { position: absolute; left: 0; bottom: 0; width: 74%; height: 5px; background: #999; }
.faq { position: absolute; right: -4px; bottom: 0; width: 40px; height: 40px; border-radius: 7px; background: #734fc0; box-shadow: 0 4px 16px rgba(0, 0, 0, .2); }
.faq svg { width: 22px; height: 22px; stroke: none; }

/* windows taskbar */
.taskbar { display: flex; height: 40px; background: linear-gradient(90deg, #2a241b, #3b3028 18%, #282d1e 26%, #203018 37%, #1f3132 50%, #24302a 64%, #24251e 75%, #1f1e1d); color: #fff; font-family: "Segoe UI", "Open Sans", sans-serif; }
.start { width: 48px; }
.search { display: flex; align-items: center; width: 288px; padding-left: 11px; border: 1px solid #5a5a5a; background: #333; }
.search input { flex: 1; min-width: 0; margin-left: 11px; padding: 0; border: 0; background: none; font: 15px "Segoe UI", "Open Sans", sans-serif; }
.search input::placeholder { color: #ddd; }
.search .castle { width: 76px; height: 36px; align-self: flex-end; stroke: none; }
.apps { display: flex; gap: 1px; }
.apps button { width: 48px; }
.apps .task-view { margin-right: 2px; }
.apps svg { width: 24px; height: 24px; stroke: none; }
.apps .open { border-bottom: 2px solid #fde08a; padding-top: 2px; }
.apps .focused { background-color: rgba(255, 255, 255, .25); }
.tray { display: flex; align-items: center; gap: 8px; margin-left: auto; padding-right: 22px; font-size: 12px; }
.weather { gap: 10px; margin-right: 14px; font-size: 13px; }
.weather svg { width: 20px; height: 30px; stroke: none; }
.lang { margin-left: 2px; }
.clock { display: flex; flex-direction: column; align-items: center; margin: 0 8px 0 4px; line-height: 18px; }
```
